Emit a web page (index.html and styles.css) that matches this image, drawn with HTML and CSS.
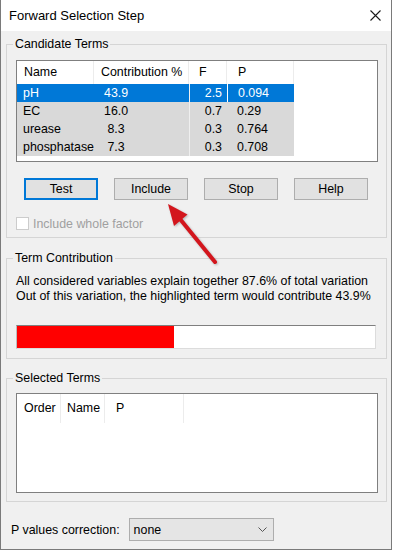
FILE: index.html
```html
<!DOCTYPE html>
<html lang="en">
<head>
    <meta charset="UTF-8">
    <meta name="viewport" content="width=device-width, initial-scale=1.0">
    <title>Forward Selection Step</title>
    <link rel="stylesheet" href="styles.css">
</head>
<body>
    <div class="window">
        <!-- 标题栏 -->
        <div class="titlebar">
            <span class="title">Forward Selection Step</span>
            <svg class="close" width="11" height="11" viewBox="0 0 11 11">
                <path d="M0.5 0.5L10.5 10.5M10.5 0.5L0.5 10.5" stroke="#1a1a1a" stroke-width="1.1" fill="none"/>
            </svg>
        </div>

        <div class="content">
            <!-- 候选变量 -->
            <fieldset class="group group-candidate">
                <legend>Candidate Terms</legend>
                <div class="list list-candidate">
                    <div class="row head">
                        <span>Name</span><span>Contribution %</span><span class="c-f">F</span><span class="c-p">P</span>
                    </div>
                    <div class="row item selected">
                        <span>pH</span><span class="c-contrib">43.9</span><span class="c-f">2.5</span><span class="c-p">0.094</span>
                    </div>
                    <div class="row item">
                        <span>EC</span><span class="c-contrib">16.0</span><span class="c-f">0.7</span><span class="c-p">0.29</span>
                    </div>
                    <div class="row item">
                        <span>urease</span><span class="c-contrib"> 8.3</span><span class="c-f">0.3</span><span class="c-p">0.764</span>
                    </div>
                    <div class="row item">
                        <span>phosphatase</span><span class="c-contrib"> 7.3</span><span class="c-f">0.3</span><span class="c-p">0.708</span>
                    </div>
                </div>

                <div class="buttons">
                    <button class="btn btn-default">Test</button>
                    <button class="btn">Include</button>
                    <button class="btn">Stop</button>
                    <button class="btn">Help</button>
                </div>

                <label class="check">
                    <span class="box"></span>
                    <span>Include whole factor</span>
                </label>
            </fieldset>

            <!-- 贡献 -->
            <fieldset class="group group-contrib">
                <legend>Term Contribution</legend>
                <p class="info">All considered variables explain together 87.6% of total variation<br>Out of this variation, the highlighted term would contribute 43.9%</p>
                <div class="progress">
                    <div class="fill" style="width: 43.9%"></div>
                </div>
            </fieldset>

            <!-- 已选变量 -->
            <fieldset class="group group-selected">
                <legend>Selected Terms</legend>
                <div class="list list-selected">
                    <div class="row head">
                        <span>Order</span><span>Name</span><span>P</span>
                    </div>
                </div>
            </fieldset>

            <div class="correction">
                <span>P values correction:</span>
                <div class="combo">
                    <span>none</span>
                    <svg width="9" height="5" viewBox="0 0 9 5">
                        <path d="M0.5 0.5L4.5 4.5L8.5 0.5" stroke="#555" stroke-width="1" fill="none"/>
                    </svg>
                </div>
            </div>
        </div>

        <!-- 红色箭头 -->
        <svg class="arrow" width="393" height="551" viewBox="0 0 393 551">
            <line x1="214" y1="262" x2="179" y2="219" stroke="#d3161d" stroke-width="4" stroke-linecap="round"/>
            <polygon points="167,204 186.5,214.5 173,226" fill="#d3161d"/>
        </svg>
    </div>
</body>
</html>
```

FILE: styles.css
```css
body {
    margin: 0;
    background-color: #fff;
    font-family: "Liberation Sans", Arial, sans-serif;
    font-size: 12.4px;
    color: #000;
}
.window {
    position: relative;
    width: 392px;
    height: 550px;
    box-sizing: border-box;
    border: 1px solid #7a7a7a;
    border-top: none;
    background-color: #f0f0f0;
    display: flex;
    flex-direction: column;
}

/* 标题栏 */
.titlebar {
    flex-shrink: 0;
    height: 31px;
    background-color: #fff;
    display: flex;
    align-items: center;
    justify-content: space-between;
    padding: 0 9px 0 8px;
}
.title {
    font-size: 13px;
    line-height: 16px;
}
.close {
    margin-right: 1px;
}

.content {
    padding: 5px 0 0 5px;
}

/* 分组框 */
.group {
    width: 381px;
    box-sizing: border-box;
    margin: 0;
    border: 1px solid #d5d5d5;
    padding: 0 8px 0 9px;
}
.group legend {
    line-height: 16px;
    padding: 0 2px;
    margin-left: -3px;
}
.group-candidate {
    padding-top: 8px;
    padding-bottom: 7px;
}
.group-contrib {
    margin-top: 12px;
    padding-top: 8px;
    padding-bottom: 9px;
}
.group-selected {
    margin-top: 11px;
    padding-top: 7px;
    padding-bottom: 8px;
}

/* 列表 */
.list {
    width: 362px;
    box-sizing: border-box;
    border: 1px solid #7f7f7f;
    background-color: #fff;
}
.list-candidate {
    height: 102px;
}
.list-selected {
    height: 100px;
}
.row {
    display: grid;
    width: 277px;
}
.list-candidate .row {
    grid-template-columns: 77px 95px 38px 67px;
}
.list-selected .row {
    grid-template-columns: 44px 44px 79px;
    width: 167px;
}
.row span {
    white-space: pre;
    overflow: hidden;
}
.head {
    height: 23px;
    line-height: 23px;
}
.list-selected .head {
    height: 29px;
    line-height: 29px;
}
.head span {
    padding-left: 7px;
    border-right: 1px solid #ececec;
}
.list-candidate .head .c-f {
    padding-left: 10px;
}
.list-candidate .head .c-p {
    padding-left: 11px;
}
.list-selected .head span:nth-child(2) {
    padding-left: 6px;
}
.list-selected .head span:nth-child(3) {
    padding-left: 11px;
}
.item {
    height: 18px;
    line-height: 18px;
    background-color: #d9d9d9;
}
.item span:first-child {
    padding-left: 6px;
}
.item .c-contrib {
    padding-left: 10px;
}
.item .c-f {
    text-align: right;
    padding-right: 5px;
    border-left: 1px solid #efefef;
}
.item .c-p {
    padding-left: 10px;
}
.selected {
    background-color: #0078d7;
    color: #fff;
}
.selected .c-p {
    border-left: 1px solid #fff;
}

/* 按钮 */
.buttons {
    display: flex;
    gap: 16px;
    margin: 16px 0 0 8px;
}
.btn {
    width: 74px;
    height: 22px;
    box-sizing: border-box;
    padding: 0;
    font-family: inherit;
    font-size: 12.4px;
    color: #000;
    background-color: #e1e1e1;
    border: 1px solid #adadad;
}
.btn-default {
    border: 2px solid #0078d7;
}

.check {
    display: flex;
    align-items: center;
    gap: 4px;
    margin-top: 17px;
    height: 13px;
    color: #a0a0a0;
}
.box {
    width: 13px;
    height: 13px;
    box-sizing: border-box;
    border: 1px solid #cccccc;
    background-color: #fff;
}

/* 贡献说明 */
.info {
    margin: 0;
    line-height: 15px;
}
.progress {
    margin-top: 21px;
    height: 24px;
    width: 360px;
    box-sizing: border-box;
    border: 1px solid #dcdcdc;
    border-top-color: #7f7f7f;
    border-left-color: #bcbcbc;
    background-color: #fff;
}
.fill {
    height: 100%;
    background-color: #ff0000;
}

/* 底部 */
.correction {
    display: flex;
    align-items: center;
    margin-top: 16px;
    padding-left: 5px;
}
.combo {
    margin-left: 9px;
    width: 145px;
    height: 23px;
    box-sizing: border-box;
    border: 1px solid #adadad;
    background-color: #e5e5e5;
    display: flex;
    align-items: center;
    justify-content: space-between;
    padding: 0 6px 0 4px;
}

.arrow {
    position: absolute;
    top: 0;
    left: 0;
    pointer-events: none;
    filter: drop-shadow(1px 1px 1px rgba(0, 0, 0, 0.25));
}
```
